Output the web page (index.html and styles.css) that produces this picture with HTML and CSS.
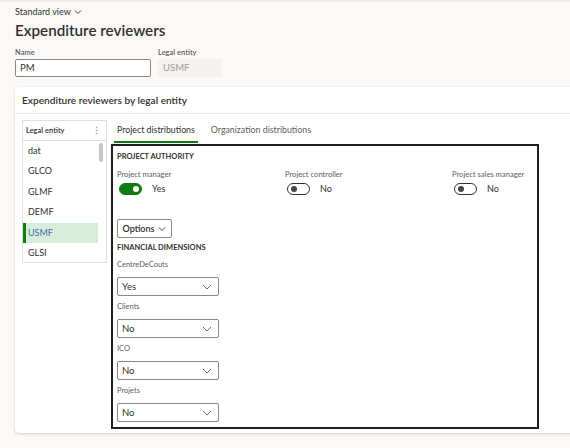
FILE: index.html
```html
<!DOCTYPE html>
<html>
<head>
<meta charset="utf-8">
<link rel="stylesheet" href="styles.css">
</head>
<body>
<div class="page">
  <div class="topline"></div>
  <div class="view">Standard view <svg class="chev" width="8" height="6" viewBox="0 0 8 6"><path d="M1 1.5 L4 4.5 L7 1.5" fill="none" stroke="#323130" stroke-width="0.9"/></svg></div>
  <h1 class="title">Expenditure reviewers</h1>
  <div class="fields">
    <div class="field">
      <div class="flabel">Name</div>
      <div class="input name">PM</div>
    </div>
    <div class="field">
      <div class="flabel">Legal entity</div>
      <div class="input disabled">USMF</div>
    </div>
  </div>

  <div class="card">
    <div class="card-head">Expenditure reviewers by legal entity</div>
    <div class="card-body">
      <div class="listbox">
        <div class="list-head"><span>Legal entity</span><span class="dots">⋮</span></div>
        <div class="list-rows">
          <div class="row">dat</div>
          <div class="row">GLCO</div>
          <div class="row">GLMF</div>
          <div class="row">DEMF</div>
          <div class="row sel">USMF</div>
          <div class="row">GLSI</div>
        </div>
        <div class="scroll"></div>
      </div>
      <div class="main">
        <div class="tabs">
          <div class="tab active">Project distributions</div>
          <div class="tab">Organization distributions</div>
        </div>
        <div class="panel">
          <div class="section">PROJECT AUTHORITY</div>
          <div class="roles">
            <div class="role">
              <div class="rlabel">Project manager</div>
              <div class="tog-row"><span class="toggle on"><span class="knob"></span></span><span class="tval">Yes</span></div>
            </div>
            <div class="role">
              <div class="rlabel">Project controller</div>
              <div class="tog-row"><span class="toggle"><span class="knob"></span></span><span class="tval">No</span></div>
            </div>
            <div class="role">
              <div class="rlabel">Project sales manager</div>
              <div class="tog-row"><span class="toggle"><span class="knob"></span></span><span class="tval">No</span></div>
            </div>
          </div>
          <div class="options">Options <svg width="8" height="6" viewBox="0 0 8 6"><path d="M1 1.5 L4 4.5 L7 1.5" fill="none" stroke="#323130" stroke-width="0.9"/></svg></div>
          <div class="section fin">FINANCIAL DIMENSIONS</div>
          <div class="dim">
            <div class="dlabel">CentreDeCouts</div>
            <div class="select"><span>Yes</span><svg width="10" height="6" viewBox="0 0 10 6"><path d="M1 1 L5 5 L9 1" fill="none" stroke="#605e5c" stroke-width="0.9"/></svg></div>
          </div>
          <div class="dim">
            <div class="dlabel">Clients</div>
            <div class="select"><span>No</span><svg width="10" height="6" viewBox="0 0 10 6"><path d="M1 1 L5 5 L9 1" fill="none" stroke="#605e5c" stroke-width="0.9"/></svg></div>
          </div>
          <div class="dim">
            <div class="dlabel">ICO</div>
            <div class="select"><span>No</span><svg width="10" height="6" viewBox="0 0 10 6"><path d="M1 1 L5 5 L9 1" fill="none" stroke="#605e5c" stroke-width="0.9"/></svg></div>
          </div>
          <div class="dim">
            <div class="dlabel">Projets</div>
            <div class="select"><span>No</span><svg width="10" height="6" viewBox="0 0 10 6"><path d="M1 1 L5 5 L9 1" fill="none" stroke="#605e5c" stroke-width="0.9"/></svg></div>
          </div>
        </div>
      </div>
    </div>
  </div>
</div>
</body>
</html>
```
FILE: styles.css
```css
* { box-sizing: border-box; }
html, body { margin: 0; padding: 0; }
body {
  background: #faf9f8;
  font-family: Lato, "Noto Sans", sans-serif;
  color: #323130;
  width: 570px;
  height: 448px;
  overflow: hidden;
}
.page { position: relative; height: 448px; }
.topline { height: 2px; background: #efeeed; }
.view {
  margin: 4px 0 0 15px;
  height: 12px;
  line-height: 12px;
  font-size: 9px;
  display: flex;
  align-items: center;
  gap: 3px;
}
.title {
  margin: 2px 0 0 15px;
  font-size: 15.2px;
  font-weight: 600;
  line-height: 20px;
  height: 20px;
}
.fields { display: flex; gap: 7px; margin: 8px 0 0 15px; }
.field { display: flex; flex-direction: column; }
.flabel {
  font-size: 7.5px;
  font-weight: 600;
  color: #605e5c;
  line-height: 10px;
  height: 10px;
}
.input {
  margin-top: 1px;
  height: 18px;
  line-height: 16px;
  font-size: 9.5px;
  padding-left: 4px;
}
.input.name { width: 136px; border: 1px solid #8a8886; border-radius: 2px; background: #fff; }
.input.disabled { width: 64px; background: #f3f2f1; color: #a19f9d; border: 1px solid #f3f2f1; }

.card {
  margin: 10px -20px 0 15px;
  height: 346px;
  background: #fff;
  border-radius: 4px;
  box-shadow: 0 1px 3px rgba(0,0,0,0.16), 0 0 1px rgba(0,0,0,0.1);
}
.card-head {
  height: 27px;
  line-height: 26px;
  padding-left: 7px;
  font-size: 10.1px;
  font-weight: 600;
  border-bottom: 1px solid #edebe9;
}
.card-body { display: flex; padding: 6px 0 0 7px; }
.listbox {
  position: relative;
  width: 85px;
  height: 143px;
  border: 1px solid #e1dfdd;
  overflow: hidden;
  background: #fff;
}
.list-head {
  height: 20px;
  border-bottom: 1px solid #e1dfdd;
  display: flex;
  justify-content: space-between;
  align-items: center;
  padding: 0 5px 0 3px;
  font-size: 7.5px;
  font-weight: 600;
}
.dots { color: #a19f9d; font-size: 9px; }
.list-rows { width: 75px; }
.row {
  height: 20.4px;
  line-height: 20.4px;
  font-size: 9px;
  padding-left: 5px;
}
.row.sel {
  background: #d9eddc;
  border-left: 3px solid #107c10;
  padding-left: 2px;
  color: #3d6fa6;
}
.scroll {
  position: absolute;
  left: 76px;
  top: 22px;
  width: 4px;
  height: 19px;
  background: #c8c6c4;
  border-radius: 2px;
}
.main { margin-left: 4px; width: 428px; }
.tabs { display: flex; height: 24px; padding-left: 6px; gap: 13px; }
.tab {
  font-size: 8.8px;
  line-height: 20px;
  color: #605e5c;
  position: relative;
}
.tab.active { color: #323130; padding: 0 3px; margin-left: -3px; }
.tab.active::after {
  content: "";
  position: absolute;
  left: 0; right: 0;
  bottom: 1px;
  height: 2px;
  background: #107c10;
}
.panel {
  border: 2px solid #1f1f1f;
  height: 285px;
  padding: 5px 0 0 4px;
}
.section {
  font-size: 7.5px;
  font-weight: 700;
  line-height: 12px;
  height: 12px;
}
.roles { display: grid; grid-template-columns: 168px 167px auto; margin-top: 5px; }
.rlabel { font-size: 7.6px; color: #605e5c; line-height: 12px; height: 12px; }
.tog-row { display: flex; align-items: center; margin-top: 2px; height: 13px; }
.toggle {
  position: relative;
  width: 23px;
  height: 12px;
  border-radius: 6px;
  border: 1px solid #323130;
  background: #fff;
  margin-left: 2px;
}
.toggle .knob {
  position: absolute;
  top: 2px; left: 2.5px;
  width: 6px; height: 6px;
  border-radius: 50%;
  background: #484644;
}
.toggle.on { background: #107c10; border-color: #107c10; }
.toggle.on .knob { left: auto; right: 2.5px; background: #fff; }
.tval { font-size: 9px; margin-left: 10px; }
.options {
  margin-top: 24px;
  width: 55px;
  height: 19px;
  border: 1px solid #8a8886;
  border-radius: 2px;
  font-size: 9px;
  font-weight: 600;
  display: flex;
  align-items: center;
  justify-content: center;
  gap: 4px;
}
.section.fin { margin-top: 4px; }
.dim { margin-top: 5px; }
.dlabel { font-size: 7.5px; color: #605e5c; line-height: 12px; height: 12px; }
.select {
  margin-top: 6px;
  width: 102px;
  height: 19px;
  border: 1px solid #8a8886;
  border-radius: 2px;
  display: flex;
  justify-content: space-between;
  align-items: center;
  padding: 0 6px 0 4px;
  font-size: 9.5px;
}
```
